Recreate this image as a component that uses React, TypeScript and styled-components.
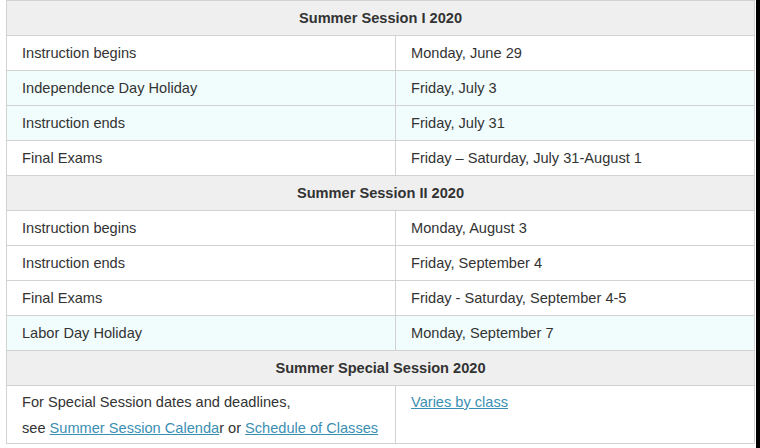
import React from "react";
import styled, { createGlobalStyle } from "styled-components";

const Global = createGlobalStyle`
  html, body { margin: 0; padding: 0; background: #fff; }
  body { font-family: "Liberation Sans", Arial, sans-serif; }
`;

const Page = styled.div`
  width: 760px;
  height: 448px;
  background: #fff;
  border-right: 4px solid #000;
  padding: 0 0 0 6px;
  box-sizing: border-box;
  overflow: hidden;
`;

const Table = styled.table`
  width: 748px;
  border-collapse: collapse;
  table-layout: fixed;
  font-size: 14.6px;
  color: #333;
`;

const HeadCell = styled.th`
  background: #efefef;
  border: 1px solid #d2d2d2;
  padding: 4px 15px;
  line-height: 26px;
  font-weight: bold;
  text-align: center;
  color: #333;
`;

const Row = styled.tr<{ $tint?: boolean }>`
  background: ${(p) => (p.$tint ? "#f1fdfd" : "#fff")};
`;

const Cell = styled.td<{ $top?: boolean }>`
  border: 1px solid #d2d2d2;
  padding: ${(p) => (p.$top ? "3px 15px 2px" : "4px 15px")};
  line-height: 26px;
  vertical-align: ${(p) => (p.$top ? "top" : "middle")};
  text-align: left;
  white-space: nowrap;
`;

const Link = styled.a`
  color: #3b8fb3;
  text-decoration: underline;
`;

type R = { a: string; b: string; tint?: boolean };

const sections: { title: string; rows: R[] }[] = [
  {
    title: "Summer Session I 2020",
    rows: [
      { a: "Instruction begins", b: "Monday, June 29" },
      { a: "Independence Day Holiday", b: "Friday, July 3", tint: true },
      { a: "Instruction ends", b: "Friday, July 31", tint: true },
      { a: "Final Exams", b: "Friday \u2013 Saturday, July 31-August 1" },
    ],
  },
  {
    title: "Summer Session II 2020",
    rows: [
      { a: "Instruction begins", b: "Monday, August 3" },
      { a: "Instruction ends", b: "Friday, September 4" },
      { a: "Final Exams", b: "Friday - Saturday, September 4-5" },
      { a: "Labor Day Holiday", b: "Monday, September 7", tint: true },
    ],
  },
];

export default function App() {
  return (
    <>
      <Global />
      <Page>
        <Table>
          <colgroup>
            <col style={{ width: 389 }} />
            <col style={{ width: 359 }} />
          </colgroup>
          <tbody>
            {sections.map((s) => (
              <React.Fragment key={s.title}>
                <tr>
                  <HeadCell colSpan={2}>{s.title}</HeadCell>
                </tr>
                {s.rows.map((r, i) => (
                  <Row key={i} $tint={r.tint}>
                    <Cell>{r.a}</Cell>
                    <Cell>{r.b}</Cell>
                  </Row>
                ))}
              </React.Fragment>
            ))}
            <tr>
              <HeadCell colSpan={2}>Summer Special Session 2020</HeadCell>
            </tr>
            <Row>
              <Cell $top>
                For Special Session dates and deadlines,
                <br />
                see <Link href="#">Summer Session Calenda</Link>r or{" "}
                <Link href="#">Schedule of Classes</Link>
              </Cell>
              <Cell $top>
                <Link href="#">Varies by class</Link>
              </Cell>
            </Row>
          </tbody>
        </Table>
      </Page>
    </>
  );
}
